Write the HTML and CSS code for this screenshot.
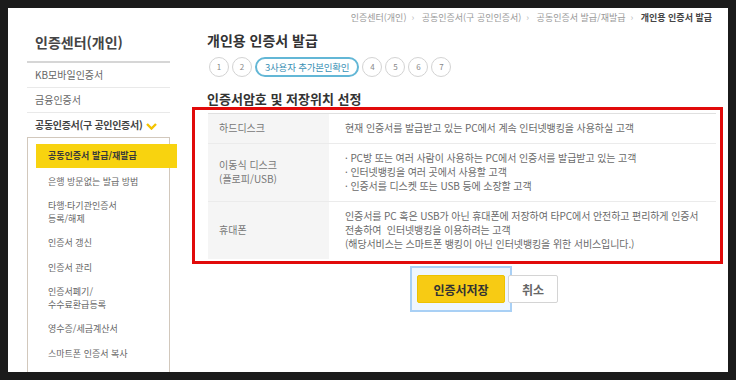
FILE: index.html
```html
<!DOCTYPE html>
<html lang="ko">
<head>
    <meta charset="UTF-8">
    <meta name="viewport" content="width=device-width, initial-scale=1.0">
    <title>개인용 인증서 발급</title>
    <link rel="stylesheet" href="styles.css">
</head>
<body>
    <div class="page">
        <div class="sidebar">
            <h2 class="side-title">인증센터(개인)</h2>
            <ul class="side-menu">
                <li>KB모바일인증서</li>
                <li>금융인증서</li>
                <li class="open">공동인증서(구 공인인증서)
                    <svg class="chevron" width="11" height="7" viewBox="0 0 11 7"><polyline points="1,1 5.5,5.5 10,1" fill="none" stroke="#f3c300" stroke-width="2.4"/></svg>
                </li>
            </ul>
            <ul class="sub-menu">
                <li class="active">공동인증서 발급/재발급</li>
                <li>은행 방문없는 발급 방법</li>
                <li class="two">타행·타기관인증서<br>등록/해제</li>
                <li>인증서 갱신</li>
                <li>인증서 관리</li>
                <li class="two">인증서폐기/<br>수수료환급등록</li>
                <li>영수증/세금계산서</li>
                <li>스마트폰 인증서 복사</li>
            </ul>
        </div>

        <div class="main">
            <div class="breadcrumb">
                <span>인증센터(개인)</span><span class="sep">›</span>
                <span>공동인증서(구 공인인증서)</span><span class="sep">›</span>
                <span>공동인증서 발급/재발급</span><span class="sep">›</span>
                <strong>개인용 인증서 발급</strong>
            </div>
            <h1 class="page-title">개인용 인증서 발급</h1>
            <div class="steps">
                <span class="step">1</span>
                <span class="step">2</span>
                <span class="step current">3사용자 추가본인확인</span>
                <span class="step">4</span>
                <span class="step">5</span>
                <span class="step">6</span>
                <span class="step">7</span>
            </div>

            <h3 class="section-title">인증서암호 및 저장위치 선정</h3>
            <div class="highlight-box">
                <table class="store-table">
                    <tr>
                        <th>하드디스크</th>
                        <td>현재 인증서를 발급받고 있는 PC에서 계속 인터넷뱅킹을 사용하실 고객</td>
                    </tr>
                    <tr>
                        <th>이동식 디스크<br>(플로피/USB)</th>
                        <td>· PC방 또는 여러 사람이 사용하는 PC에서 인증서를 발급받고 있는 고객<br>· 인터넷뱅킹을 여러 곳에서 사용할 고객<br>· 인증서를 디스켓 또는 USB 등에 소장할 고객</td>
                    </tr>
                    <tr>
                        <th>휴대폰</th>
                        <td>인증서를 PC 혹은 USB가 아닌 휴대폰에 저장하여 타PC에서 안전하고 편리하게 인증서<br>전송하여&nbsp; 인터넷뱅킹을 이용하려는 고객<br>(해당서비스는 스마트폰 뱅킹이 아닌 인터넷뱅킹을 위한 서비스입니다.)</td>
                    </tr>
                </table>
            </div>

            <div class="buttons">
                <div class="focus-ring">
                    <button class="btn btn-save">인증서저장</button>
                </div>
                <button class="btn btn-cancel">취소</button>
            </div>
        </div>
    </div>
</body>
</html>
```

FILE: styles.css
```css
body {
    margin: 8px;
    background: #1b1b1b;
    font-family: "Noto Sans CJK KR", "Noto Sans", sans-serif;
    color: #666;
}

.page {
    display: flex;
    width: 720px;
    height: 364px;
    background: #ffffff;
    overflow: hidden;
}

/* 왼쪽 메뉴 */
.sidebar {
    width: 143px;
    margin-left: 19px;
    flex-shrink: 0;
}

.side-title {
    margin: 0;
    padding: 24px 0 9px 8px;
    font-size: 14px;
    line-height: 20px;
    font-weight: bold;
    color: #444;
    border-bottom: 2px solid #d6d6d6;
}

.side-menu,
.sub-menu {
    list-style: none;
    margin: 0;
    padding: 0;
}

.side-menu li {
    height: 24px;
    line-height: 24px;
    padding-left: 8px;
    font-size: 10px;
    border-bottom: 1px solid #e9e9e9;
}

.side-menu li.open {
    border-bottom: none;
    font-weight: bold;
    color: #444;
    letter-spacing: -0.3px;
}

.chevron {
    margin-left: 1px;
    vertical-align: -1px;
}

.sub-menu {
    border: 1px solid #d2c8bc;
    border-bottom: none;
    padding: 6px 0;
    height: 300px;
}

.sub-menu li {
    padding: 6px 0 6px 20px;
    font-size: 9px;
    line-height: 13px;
}

.sub-menu li.two {
    padding: 5px 0 5px 20px;
}

.sub-menu li.active {
    margin: 0 -8px 1px 8px;
    padding: 5px 0 6px 12px;
    background: #f8d30f;
    font-weight: bold;
    color: #3a3a3a;
}

/* 본문 */
.main {
    width: 511px;
    margin-left: 37px;
    padding-top: 4px;
}

.breadcrumb {
    text-align: right;
    padding-right: 6px;
    font-size: 9px;
    line-height: 12px;
    color: #999;
}

.breadcrumb .sep {
    margin: 0 5px;
    color: #bbb;
}

.breadcrumb strong {
    color: #444;
}

.page-title {
    margin: 6px 0 0 0;
    font-size: 14px;
    line-height: 20px;
    font-weight: bold;
    color: #333;
}

.steps {
    display: flex;
    gap: 3px;
    margin: 7px 0 0 2px;
}

.step {
    width: 18px;
    height: 18px;
    border: 1px solid #d3d3d3;
    border-radius: 50%;
    font-size: 8px;
    line-height: 18px;
    text-align: center;
    color: #888;
}

.step.current {
    width: auto;
    height: 16px;
    padding: 0 8px;
    border: 2px solid #63b7d6;
    border-radius: 10px;
    font-size: 9.5px;
    line-height: 16px;
    color: #3b91b5;
    letter-spacing: -0.2px;
}

.section-title {
    margin: 14px 0 0 0;
    font-size: 13px;
    line-height: 16px;
    font-weight: bold;
    color: #333;
}

.highlight-box {
    margin: 0 -5px 0 -15px;
    padding: 3px 4px 2px 13px;
    border: 3px solid #e10a0a;
}

.store-table {
    width: 100%;
    border-collapse: collapse;
    border-top: 1px solid #e0e0e0;
    font-size: 10px;
    line-height: 14px;
}

.store-table th,
.store-table td {
    padding: 7px 4px 8px 16px;
    text-align: left;
    font-weight: normal;
    border-bottom: 1px solid #ebebeb;
    vertical-align: middle;
    color: #6a6a6a;
}

.store-table td {
    white-space: nowrap;
    letter-spacing: -0.1px;
}

.store-table tr:last-child th,
.store-table tr:last-child td {
    border-bottom: none;
}

.store-table th {
    width: 106px;
    padding-left: 11px;
    background: #f5f5f5;
    color: #777;
}

/* 버튼 */
.buttons {
    display: flex;
    align-items: flex-start;
    margin: 2px 0 0 203px;
}

.focus-ring {
    padding: 7px 5px;
    border: 2px solid #a9d0f5;
    background: #eff6fe;
}

.btn {
    display: block;
    height: 28px;
    border-radius: 2px;
    font-family: "Noto Sans CJK KR", sans-serif;
    font-size: 12px;
    font-weight: bold;
    cursor: pointer;
}

.btn-save {
    width: 88px;
    border: 1px solid #eec200;
    background: #f7cb14;
    color: #333;
}

.btn-cancel {
    width: 50px;
    margin: 9px 0 0 -4px;
    border: 1px solid #d4d4d4;
    background: #ffffff;
    color: #666;
}
```
